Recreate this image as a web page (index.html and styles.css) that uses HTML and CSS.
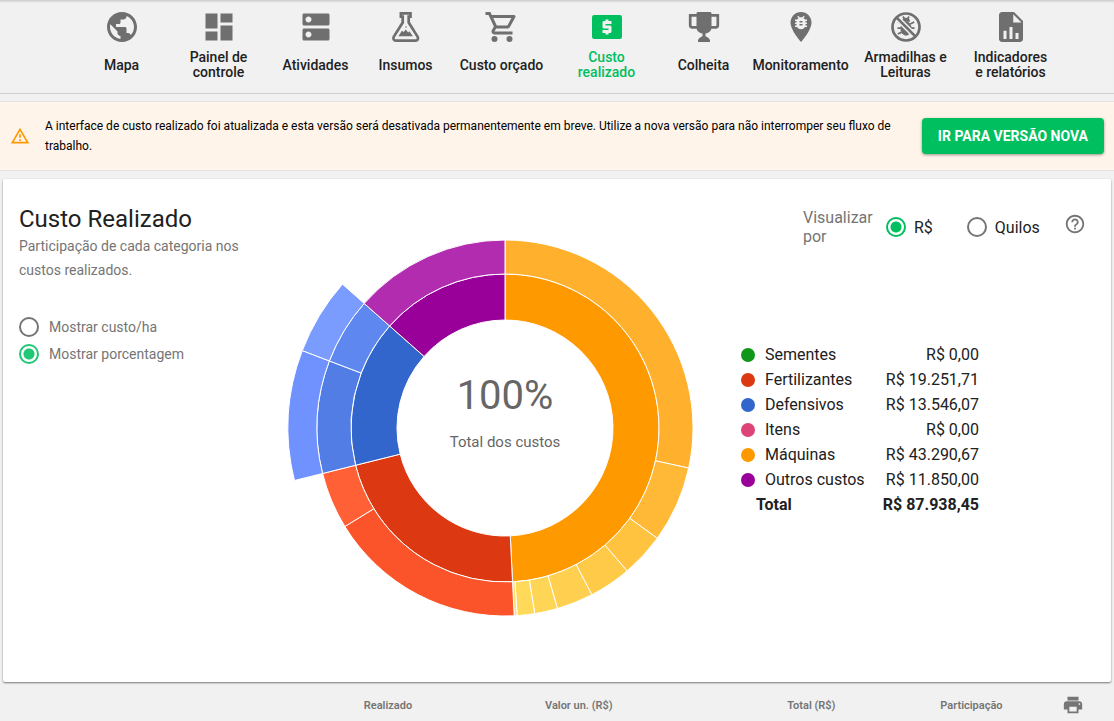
FILE: index.html
```
<!DOCTYPE html>
<html lang="pt-BR">
<head>
  <meta charset="UTF-8">
  <meta name="viewport" content="width=device-width, initial-scale=1.0">
  <title>Custo Realizado</title>
  <link rel="stylesheet" href="styles.css">
</head>
<body>
  <nav class="menu">
    <a href="#" class="menu-item">
      <svg class="menu-icon" viewBox="0 0 24 24"><path d="M12 2C6.48 2 2 6.48 2 12s4.48 10 10 10 10-4.48 10-10S17.52 2 12 2zm-1 17.93c-3.95-.49-7-3.85-7-7.93 0-.62.08-1.21.21-1.79L9 15v1c0 1.1.9 2 2 2v1.93zm6.9-2.54c-.26-.81-1-1.39-1.9-1.39h-1v-3c0-.55-.45-1-1-1H8v-2h2c.55 0 1-.45 1-1V7h2c1.1 0 2-.9 2-2v-.41c2.93 1.19 5 4.06 5 7.41 0 2.08-.8 3.97-2.1 5.39z"/></svg>
      <span class="menu-label">Mapa</span>
    </a>
    <a href="#" class="menu-item">
      <svg class="menu-icon" viewBox="0 0 24 24"><path d="M3 13h8V3H3v10zm0 8h8v-6H3v6zm10 0h8V11h-8v10zm0-18v6h8V3h-8z"/></svg>
      <span class="menu-label">Painel de<br>controle</span>
    </a>
    <a href="#" class="menu-item">
      <svg class="menu-icon" viewBox="0 0 24 24"><path d="M20 13H4c-.55 0-1 .45-1 1v6c0 .55.45 1 1 1h16c.55 0 1-.45 1-1v-6c0-.55-.45-1-1-1zM7 19c-1.1 0-2-.9-2-2s.9-2 2-2 2 .9 2 2-.9 2-2 2zM20 3H4c-.55 0-1 .45-1 1v6c0 .55.45 1 1 1h16c.55 0 1-.45 1-1V4c0-.55-.45-1-1-1zM7 9c-1.1 0-2-.9-2-2s.9-2 2-2 2 .9 2 2-.9 2-2 2z"/></svg>
      <span class="menu-label">Atividades</span>
    </a>
    <a href="#" class="menu-item">
      <svg class="menu-icon" viewBox="0 0 24 24">
        <path class="line" d="M8.600 2.900h6.400v2.200h-1.200V9l5.900 9.400c.8 1.400.1 2.700-1.400 2.700H5.300c-1.500 0-2.200-1.300-1.400-2.700L9.800 9V5.100H8.600z"/>
        <path d="M6.900 18.200l2.400-3.700 1.200.9 1.400-1.700 1.500 1.900.9-.8 2.300 3.400z"/>
        <circle cx="12" cy="12" r=".5"/>
      </svg>
      <span class="menu-label">Insumos</span>
    </a>
    <a href="#" class="menu-item">
      <svg class="menu-icon" viewBox="0 0 24 24"><path d="M15.550 13c.75 0 1.410-.41 1.750-1.030l3.580-6.490A.996.996 0 0 0 20.010 4H5.210l-.94-2H1v2h2l3.600 7.590-1.350 2.440C4.520 15.370 5.480 17 7 17h12v-2H7l1.100-2h7.450zM6.160 6h12.150l-2.760 5H8.530L6.160 6z"/><circle cx="7" cy="20" r="2"/><circle cx="17" cy="20" r="2"/></svg>
      <span class="menu-label">Custo orçado</span>
    </a>
    <a href="#" class="menu-item active">
      <svg class="menu-icon" viewBox="0 0 24 24"><rect x="2" y="4" width="20" height="16" rx="1.500"/><path class="cut" d="M11 17h2v-1h1c.55 0 1-.45 1-1v-3c0-.55-.45-1-1-1h-3v-1h4V8h-2V7h-2v1h-1c-.55 0-1 .45-1 1v3c0 .55.45 1 1 1h3v1H9v2h2v1z"/></svg>
      <span class="menu-label">Custo<br>realizado</span>
    </a>
    <a href="#" class="menu-item">
      <svg class="menu-icon" viewBox="0 0 24 24">
        <path d="M8 2h8c.6 0 1 .4 1 1v9.500c0 2-1.700 3.500-4 3.900v1.800c1.600.5 2.700 1.500 3 2.800v1H8v-1c.3-1.300 1.400-2.300 3-2.800v-1.800c-2.300-.4-4-1.900-4-3.900V3c0-.6.4-1 1-1z"/>
        <path class="line" d="M7.500 4.300H2.800v6.500c0 .9.500 1.400 1.400 1.400h3.300M16.500 4.300h4.700v6.500c0 .9-.5 1.400-1.400 1.400h-3.300"/>
      </svg>
      <span class="menu-label">Colheita</span>
    </a>
    <a href="#" class="menu-item">
      <svg class="menu-icon" viewBox="0 0 24 24">
        <path d="M12 2C8.130 2 5 5.130 5 9c0 5.250 7 13 7 13s7-7.750 7-13c0-3.870-3.130-7-7-7z"/>
        <path class="cut" transform="translate(6 3) scale(.5)" d="M20 8h-2.810c-.45-.78-1.070-1.450-1.820-1.960L17 4.410 15.590 3l-2.170 2.170C12.960 5.060 12.490 5 12 5s-.96.060-1.410.17L8.410 3 7 4.410l1.620 1.630C7.880 6.550 7.260 7.220 6.810 8H4v2h2.090c-.05.33-.09.66-.09 1v1H4v2h2v1c0 .34.040.67.09 1H4v2h2.810c1.040 1.790 2.970 3 5.190 3s4.150-1.210 5.190-3H20v-2h-2.090c.05-.33.09-.66.09-1v-1h2v-2h-2v-1c0-.34-.04-.67-.09-1H20V8zm-6 8h-4v-2h4v2zm0-4h-4v-2h4v2z"/>
      </svg>
      <span class="menu-label">Monitoramento</span>
    </a>
    <a href="#" class="menu-item">
      <svg class="menu-icon" viewBox="0 0 24 24">
        <ellipse cx="12" cy="13" rx="3.700" ry="4.800"/>
        <path d="M9.300 8.500a2.700 2.700 0 0 1 5.400 0z"/>
        <path class="thin" d="M6.500 8.700l2.700 1.300M6.300 12.700h11.400M6.500 16.700l2.700-1.300M17.500 8.700l-2.700 1.300M17.500 16.700l-2.700-1.300M10 5l1 1.700M14 5l-1 1.700"/>
        <path class="gap" d="M5.500 5.500l13 13"/>
        <circle class="line" cx="12" cy="12" r="9"/>
        <path class="line" d="M5.600 5.600l12.800 12.800"/>
      </svg>
      <span class="menu-label">Armadilhas e<br>Leituras</span>
    </a>
    <a href="#" class="menu-item">
      <svg class="menu-icon" viewBox="0 0 24 24"><path d="M14 2H6c-1.100 0-2 .9-2 2v16c0 1.100.9 2 2 2h12c1.100 0 2-.9 2-2V8z"/><path class="cut" d="M13.500 3.500V9H19zM7 14.500h2V20H7zM11 12h2v8h-2zM15 16h2v4h-2z"/></svg>
      <span class="menu-label">Indicadores<br>e relatórios</span>
    </a>
  </nav>

  <section class="notice">
    <svg class="notice-icon" viewBox="0 0 24 24"><path d="M12 5.990L19.530 19H4.470L12 5.990M12 2L1 21h22L12 2zm1 14h-2v2h2v-2zm0-6h-2v4h2v-4z"/></svg>
    <p class="notice-text">A interface de custo realizado foi atualizada e esta versão será desativada permanentemente em breve. Utilize a nova versão para não interromper seu fluxo de trabalho.</p>
    <button type="button" class="btn">IR PARA VERSÃO NOVA</button>
  </section>

  <main class="card">
    <div class="info">
      <h1>Custo Realizado</h1>
      <p class="subtitle">Participação de cada categoria nos custos realizados.</p>
      <div class="options">
        <label class="radio"><input type="radio" name="modo">Mostrar custo/ha</label>
        <label class="radio"><input type="radio" name="modo" checked>Mostrar porcentagem</label>
      </div>
    </div>

    <svg class="chart" id="chart" viewBox="-224 -224 448 448" role="img" aria-label="Total dos custos">
      <g id="slices"></g>
      <text class="chart-value" x="0" y="-19">100%</text>
      <text class="chart-label" x="0" y="19">Total dos custos</text>
    </svg>

    <div class="side">
      <div class="controls">
        <span class="controls-title">Visualizar por</span>
        <label class="radio"><input type="radio" name="unidade" checked>R$</label>
        <label class="radio"><input type="radio" name="unidade">Quilos</label>
        <button type="button" class="help" aria-label="Ajuda">
          <svg viewBox="0 0 24 24"><path d="M11 18h2v-2h-2v2zm1-16C6.480 2 2 6.480 2 12s4.480 10 10 10 10-4.480 10-10S17.520 2 12 2zm0 18c-4.410 0-8-3.590-8-8s3.590-8 8-8 8 3.590 8 8-3.590 8-8 8zm0-14c-2.210 0-4 1.790-4 4h2c0-1.100.9-2 2-2s2 .9 2 2c0 2-3 1.750-3 5h2c0-2.250 3-2.500 3-5 0-2.210-1.790-4-4-4z"/></svg>
        </button>
      </div>
      <table class="legend">
        <tbody>
          <tr><td class="mark"><span class="dot green"></span></td><td>Sementes</td><td class="value">R$ 0,00</td></tr>
          <tr><td class="mark"><span class="dot red"></span></td><td>Fertilizantes</td><td class="value">R$ 19.251,71</td></tr>
          <tr><td class="mark"><span class="dot blue"></span></td><td>Defensivos</td><td class="value">R$ 13.546,07</td></tr>
          <tr><td class="mark"><span class="dot pink"></span></td><td>Itens</td><td class="value">R$ 0,00</td></tr>
          <tr><td class="mark"><span class="dot orange"></span></td><td>Máquinas</td><td class="value">R$ 43.290,67</td></tr>
          <tr><td class="mark"><span class="dot purple"></span></td><td>Outros custos</td><td class="value">R$ 11.850,00</td></tr>
          <tr class="total"><td colspan="2">Total</td><td class="value">R$ 87.938,45</td></tr>
        </tbody>
      </table>
    </div>
  </main>

  <table class="costs">
    <thead>
      <tr>
        <th class="col-name"></th>
        <th class="col-done">Realizado</th>
        <th class="col-unit">Valor un. (R$)</th>
        <th class="col-total">Total (R$)</th>
        <th class="col-share">Participação</th>
        <th class="col-print">
          <button type="button" class="print" aria-label="Imprimir">
            <svg viewBox="0 0 24 24"><path d="M19 8H5c-1.660 0-3 1.340-3 3v6h4v4h12v-4h4v-6c0-1.660-1.340-3-3-3zm-3 11H8v-5h8v5zm3-7c-.55 0-1-.45-1-1s.45-1 1-1 1 .45 1 1-.45 1-1 1zm-1-9H6v4h12V3z"/></svg>
          </button>
        </th>
      </tr>
    </thead>
  </table>

  <script src="chart.js"></script>
</body>
</html>
```

FILE: styles.css
```
* {
  box-sizing: border-box;
}

body {
  margin: 0;
  background: #f1f1f1;
  color: #212121;
  font-family: Roboto, "Liberation Sans", sans-serif;
  font-size: 14px;
}

button {
  font-family: inherit;
  border: none;
  cursor: pointer;
}

/* menu */
.menu {
  display: grid;
  grid-template-columns: 97fr 97fr 97fr 83fr 109fr 101fr 93fr 101fr 109fr 101fr;
  padding: 9px 53px 13px 73px;
  border-bottom: 1px solid #d0d0d0;
  box-shadow: inset 0 3px 3px -2px rgba(0, 0, 0, 0.2);
}

.menu-item {
  display: flex;
  flex-direction: column;
  align-items: center;
  gap: 5px;
  color: #212121;
  text-decoration: none;
}

.menu-icon {
  width: 36px;
  height: 36px;
  fill: #6f6f6f;
  stroke: none;
}

.menu-icon .line {
  fill: none;
  stroke: #6f6f6f;
  stroke-width: 1.8;
}

.menu-icon .thin {
  fill: none;
  stroke: #6f6f6f;
  stroke-width: 1.2;
}

.menu-icon .gap {
  stroke: #f1f1f1;
  stroke-width: 3.6;
}

.menu-icon .cut {
  fill: #f1f1f1;
}

.menu-label {
  display: flex;
  align-items: center;
  height: 30px;
  font-weight: 500;
  line-height: 15px;
  text-align: center;
  white-space: nowrap;
}

.active {
  color: #00bf5f;
}

.active .menu-icon {
  fill: #00bf5f;
}

/* notice */
.notice {
  display: flex;
  align-items: center;
  gap: 15px;
  margin: 7px 0 8px;
  padding: 14px 10px;
  background: #fff4e9;
  border-top: 1px solid #e4e4e4;
  border-bottom: 1px solid #e4e4e4;
}

.notice-icon {
  flex: none;
  width: 20px;
  height: 20px;
  fill: #ff9800;
}

.notice-text {
  flex: 1;
  margin: 0;
  color: #000;
  font-size: 12px;
  line-height: 20px;
}

.btn {
  height: 36px;
  padding: 0 16px;
  margin-left: 8px;
  border-radius: 4px;
  background: #00bf5f;
  color: #fff;
  font-size: 14px;
  font-weight: 700;
  box-shadow: 0 1px 3px rgba(0, 0, 0, 0.4);
}

/* card */
.card {
  display: grid;
  grid-template-columns: 252px 1fr 372px;
  margin: 0 3px;
  padding: 25px 0 30px 16px;
  background: #fff;
  border-radius: 2px;
  box-shadow: 0 1px 2px rgba(0, 0, 0, 0.5);
}

h1 {
  margin: 0;
  font-size: 24px;
  font-weight: 400;
  line-height: 30px;
}

.subtitle {
  margin: 0 0 31px;
  color: #757575;
  line-height: 24px;
}

.radio {
  display: flex;
  align-items: center;
  gap: 8px;
}

.radio input {
  appearance: none;
  flex: none;
  width: 20px;
  height: 20px;
  margin: 0;
  border: 2px solid #757575;
  border-radius: 50%;
}

.radio input:checked {
  border-color: #00bf5f;
  background: radial-gradient(circle, #00bf5f 5px, transparent 6px);
}

.options .radio {
  gap: 10px;
  height: 27px;
  color: #757575;
}

.options input:checked {
  border-color: #20c774;
  background: radial-gradient(circle, #20c774 5px, transparent 6px);
}

.chart {
  width: 100%;
  max-width: 448px;
  justify-self: center;
}

.chart path {
  stroke: #fff;
}

.chart text {
  fill: #666;
  text-anchor: middle;
}

.chart-value {
  font-size: 40px;
}

.chart-label {
  font-size: 15px;
}

.controls {
  display: flex;
  align-items: center;
  padding: 4px 0 0 64px;
  font-size: 16px;
  line-height: 19px;
}

.controls-title {
  width: 83px;
  padding-right: 10px;
  color: #757575;
}

.controls .radio {
  margin-right: 34px;
}

.help {
  align-self: flex-start;
  display: flex;
  align-items: center;
  justify-content: center;
  width: 20px;
  height: 32px;
  padding: 0;
  margin-left: -9px;
  background: none;
}

.help svg {
  flex: none;
  width: 22px;
  height: 22px;
  fill: #757575;
}

.legend {
  width: 240px;
  margin-top: 96px;
  padding-left: 2px;
  border-spacing: 0;
  font-size: 16px;
}

.legend td {
  height: 25px;
  padding: 0;
}

.legend .mark {
  width: 24px;
}

.legend .value {
  text-align: right;
}

.legend .total td {
  font-weight: 700;
}

.legend .total td:first-child {
  padding-left: 15px;
}

.dot {
  display: block;
  width: 14px;
  height: 14px;
  border-radius: 50%;
}

.green { background: #109618; }
.red { background: #dc3912; }
.blue { background: #3366cc; }
.pink { background: #dd4477; }
.orange { background: #ff9900; }
.purple { background: #990099; }

/* costs table */
.costs {
  width: 100%;
  table-layout: fixed;
  border-collapse: collapse;
}

.costs th {
  height: 46px;
  padding: 0;
  color: #757575;
  font-size: 11px;
  font-weight: 600;
  text-align: right;
  white-space: nowrap;
}

.col-name { width: 27%; }
.col-done { width: 10%; }
.col-unit { width: 18%; }
.col-total { width: 20%; }
.col-share { width: 15%; }

.costs .col-print {
  padding-right: 30px;
}

.print {
  padding: 0;
  background: none;
  vertical-align: middle;
}

.print svg {
  display: block;
  width: 22px;
  height: 22px;
  fill: #757575;
}
```

FILE: chart.js
```
// rings: [inner radius, outer radius]
const rings = [[108, 154], [154, 188], [188, 217]];

// angles in degrees, clockwise from the top
const slices = [
  { ring: 0, from: 0, to: 177.2, color: '#ff9900' },
  { ring: 0, from: 177.2, to: 256, color: '#dc3912' },
  { ring: 0, from: 256, to: 311.5, color: '#3366cc' },
  { ring: 0, from: 311.5, to: 360, color: '#990099' },
  { ring: 1, from: 0, to: 102.3, color: '#ffb02c' },
  { ring: 1, from: 102.3, to: 125.9, color: '#ffb936' },
  { ring: 1, from: 125.9, to: 139.5, color: '#ffc340' },
  { ring: 1, from: 139.5, to: 152.5, color: '#ffca48' },
  { ring: 1, from: 152.5, to: 163.8, color: '#ffd04f' },
  { ring: 1, from: 163.8, to: 170.9, color: '#ffd555' },
  { ring: 1, from: 170.9, to: 176.3, color: '#ffda5a' },
  { ring: 1, from: 176.3, to: 177.2, color: '#ffe070' },
  { ring: 1, from: 177.2, to: 238.4, color: '#fb542b' },
  { ring: 1, from: 238.4, to: 256, color: '#ff6035' },
  { ring: 1, from: 256, to: 290.9, color: '#527de5' },
  { ring: 1, from: 290.9, to: 311.5, color: '#5f87f0' },
  { ring: 1, from: 311.5, to: 360, color: '#b22cb0' },
  { ring: 2, from: 256, to: 290.9, color: '#7092ff' },
  { ring: 2, from: 290.9, to: 311.5, color: '#7b9cff' }
];

function point(radius, angle) {
  const rad = angle * Math.PI / 180;
  return (radius * Math.sin(rad)).toFixed(2) + ' ' + (-radius * Math.cos(rad)).toFixed(2);
}

const group = document.getElementById('slices');

slices.forEach((s) => {
  const [r1, r2] = rings[s.ring];
  const large = s.to - s.from > 180 ? 1 : 0;
  const path = document.createElementNS('http://www.w3.org/2000/svg', 'path');
  path.setAttribute('d',
    `M${point(r2, s.from)} A${r2} ${r2} 0 ${large} 1 ${point(r2, s.to)} ` +
    `L${point(r1, s.to)} A${r1} ${r1} 0 ${large} 0 ${point(r1, s.from)} Z`);
  path.setAttribute('fill', s.color);
  group.appendChild(path);
});
```
